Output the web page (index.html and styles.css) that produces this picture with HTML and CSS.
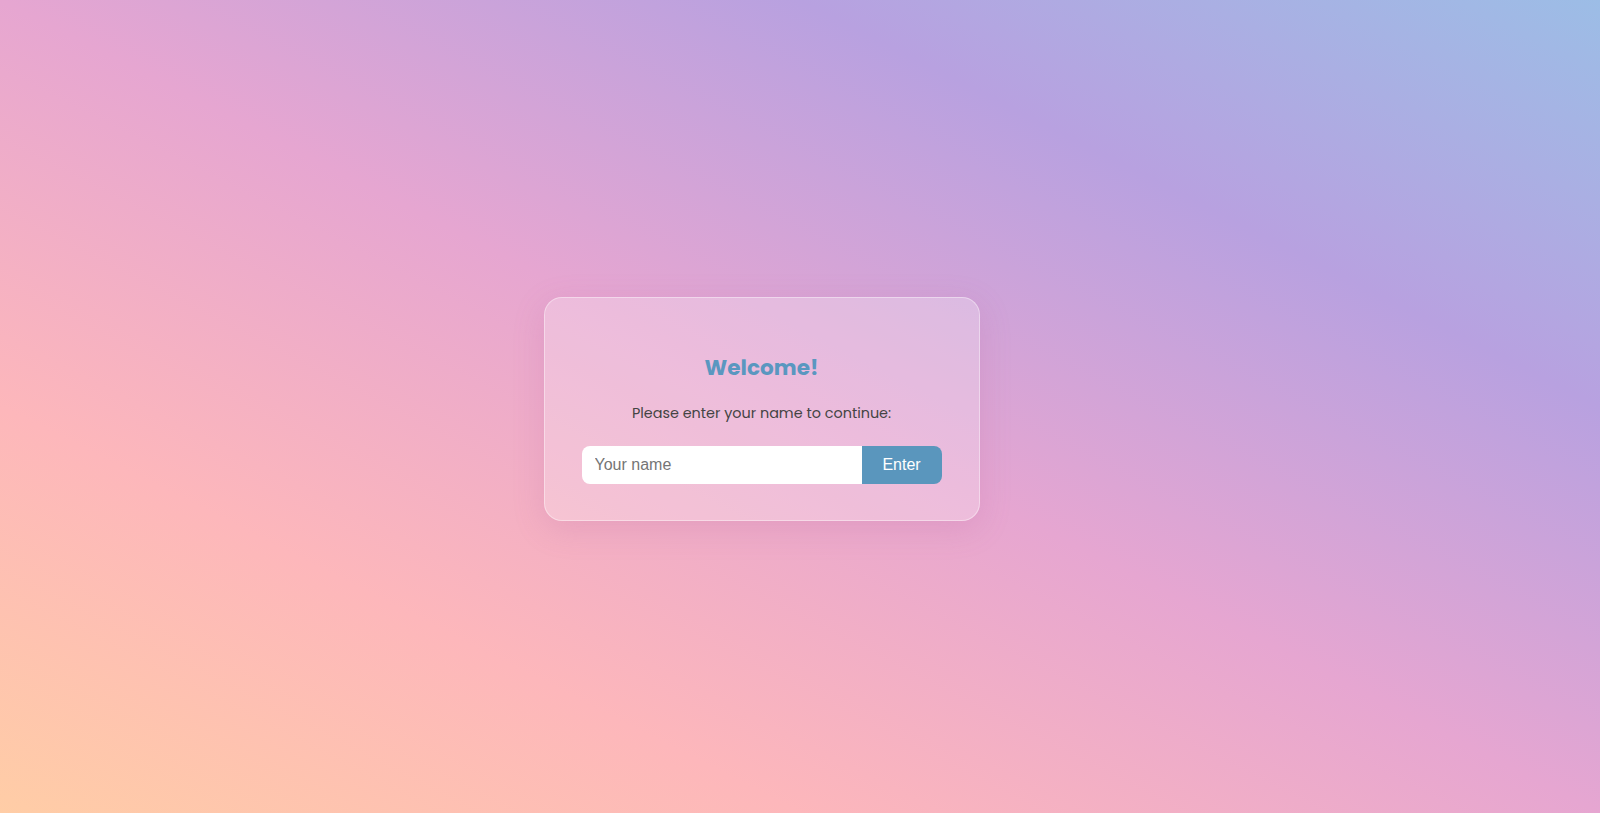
FILE: index.html
```html
<!DOCTYPE html>
<html lang="en">
<head>
<meta charset="utf-8">
<title>Welcome</title>
<link rel="stylesheet" href="styles.css">
</head>
<body>
<main class="stage">
  <section class="card">
    <h2 class="title">Welcome!</h2>
    <p class="subtitle">Please enter your name to continue:</p>
    <form class="name-form">
      <input class="name-input" type="text" placeholder="Your name">
      <button class="enter-btn" type="button">Enter</button>
    </form>
  </section>
</main>
</body>
</html>
```
FILE: styles.css
```css
html, body {
  margin: 0;
  padding: 0;
  height: 100%;
}
body {
  font-family: "Poppins", "Inter", "Noto Sans", sans-serif;
  background: linear-gradient(to top right, #ffcda6 0%, #fdb7bb 25%, #e6a6d1 50%, #b8a1e0 75%, #9cbde6 100%);
  overflow: hidden;
}
.stage {
  height: 100%;
  box-sizing: border-box;
  display: flex;
  align-items: center;
  justify-content: center;
  padding: 5px 77px 0 0;
}
.card {
  width: 436px;
  box-sizing: border-box;
  padding: 54px 37px 36px 37px;
  border-radius: 18px;
  background: rgba(255, 255, 255, 0.25);
  border: 1px solid rgba(255, 255, 255, 0.4);
  box-shadow: 0 8px 32px rgba(180, 90, 150, 0.18);
  text-align: center;
}
.title {
  margin: 0;
  font-size: 21.6px;
  line-height: 32px;
  font-weight: 700;
  color: #5a97c0;
}
.subtitle {
  margin: 17px 0 21px;
  font-size: 14.4px;
  line-height: 24px;
  color: #444;
}
.name-form {
  display: flex;
  height: 38px;
  margin: 0;
}
.name-input {
  flex: 1;
  min-width: 0;
  border: none;
  outline: none;
  background: #fff;
  border-radius: 8px 0 0 8px;
  padding: 0 13px;
  font-family: "Liberation Sans", Arial, sans-serif;
  font-size: 16px;
  color: #333;
}
.name-input::placeholder {
  color: #757575;
}
.enter-btn {
  width: 80px;
  border: none;
  background: #5a96bd;
  color: #fff;
  border-radius: 0 8px 8px 0;
  font-family: "Liberation Sans", Arial, sans-serif;
  font-size: 16px;
  cursor: pointer;
}
```
